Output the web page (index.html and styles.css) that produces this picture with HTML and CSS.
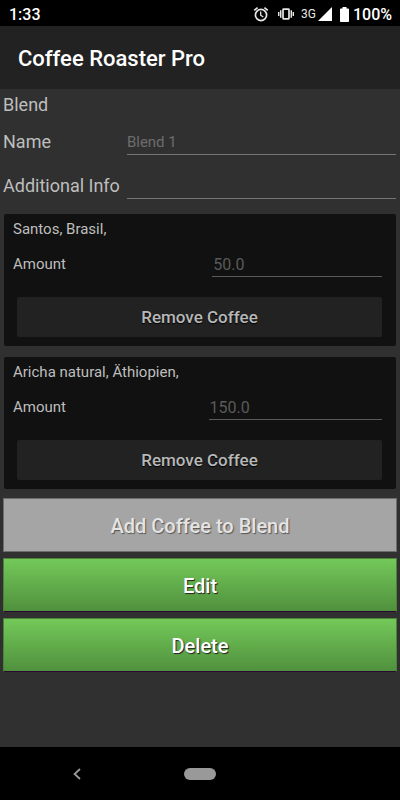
FILE: index.html
```html
<!DOCTYPE html>
<html lang="en">
<head>
<meta charset="utf-8">
<meta name="viewport" content="width=device-width, initial-scale=1">
<title>Coffee Roaster Pro</title>
<link rel="stylesheet" href="styles.css">
</head>
<body>
<div class="status">
  <span class="clock">1:33</span>
  <div class="indicators">
    <svg class="alarm" width="16" height="16" viewBox="0 0 16 16" fill="none" stroke="#e6e6e6" aria-hidden="true">
      <circle cx="8" cy="9" r="5.6" stroke-width="1.7"/>
      <path d="M7.7 5.5V9.2L10.3 11" stroke-width="1.3"/>
      <path d="M1.2 4.4L4.6 1.6M14.8 4.4L11.4 1.6" stroke-width="1.7"/>
    </svg>
    <svg class="vibrate" width="16" height="12" viewBox="0 0 16 12" fill="none" stroke="#e6e6e6" aria-hidden="true">
      <rect x="5" y="1.2" width="6" height="9.6" rx=".6" stroke-width="1.7"/>
      <path d="M2.7 2.3V9.7M13.3 2.3V9.7" stroke-width="1.5"/>
      <path d="M.7 4.1V7.9M15.3 4.1V7.9" stroke-width="1.4"/>
    </svg>
    <span class="network">3G</span>
    <svg class="signal" width="14" height="14" viewBox="0 0 14 14" fill="#fff" aria-hidden="true"><path d="M14 0V14H0Z"/></svg>
    <svg class="battery" width="9" height="15" viewBox="0 0 9 15" fill="#fff" aria-hidden="true"><path d="M2.5 0H6.5V1.5H8.2Q9 1.5 9 2.3V14.2Q9 15 8.2 15H.8Q0 15 0 14.2V2.3Q0 1.5.8 1.5H2.5Z"/></svg>
    <span class="level">100%</span>
  </div>
</div>
<header class="bar"><h1>Coffee Roaster Pro</h1></header>
<main>
  <h2>Blend</h2>
  <div class="fields">
    <label for="name">Name</label>
    <input id="name" type="text" placeholder="Blend 1">
    <label for="info">Additional Info</label>
    <input id="info" type="text">
  </div>
  <section class="card">
    <h3>Santos, Brasil,</h3>
    <div class="amount">
      <label for="amount1">Amount</label>
      <input id="amount1" type="text" inputmode="decimal" placeholder="50.0">
    </div>
    <button class="remove" type="button">Remove Coffee</button>
  </section>
  <section class="card">
    <h3>Aricha natural, Äthiopien,</h3>
    <div class="amount wide">
      <label for="amount2">Amount</label>
      <input id="amount2" type="text" inputmode="decimal" placeholder="150.0">
    </div>
    <button class="remove" type="button">Remove Coffee</button>
  </section>
  <div class="actions">
    <button class="action add" type="button">Add Coffee to Blend</button>
    <button class="action" type="button">Edit</button>
    <button class="action" type="button">Delete</button>
  </div>
</main>
<nav class="system">
  <button type="button" aria-label="Back">
    <svg width="8" height="12" viewBox="0 0 8 12" fill="none" stroke="#999" stroke-width="1.8" aria-hidden="true"><path d="M7 1L1.6 6L7 11"/></svg>
  </button>
  <button class="home" type="button" aria-label="Home"></button>
</nav>
</body>
</html>
```
FILE: styles.css
```css
* {
  box-sizing: border-box;
}

body {
  margin: 0;
  min-height: 100vh;
  display: flex;
  flex-direction: column;
  background: #303030;
  color: #bebebe;
  font-family: Roboto, sans-serif;
  font-size: 15px;
}

h1, h2, h3 {
  margin: 0;
}

input, button {
  margin: 0;
  border: 0;
  border-radius: 0;
  font-family: inherit;
}

.status {
  display: flex;
  justify-content: space-between;
  align-items: center;
  height: 26px;
  padding: 2px 8px 0 9px;
  background: #000;
  color: #fff;
  font-size: 16px;
  font-weight: 500;
}

.indicators {
  display: flex;
  align-items: center;
}

.vibrate {
  margin-left: 9px;
}

.network {
  margin-left: 7px;
  color: #e6e6e6;
  font-size: 12px;
  font-weight: 400;
}

.signal {
  margin-left: 2px;
}

.battery {
  margin: 0 4px 0 8px;
}

.bar {
  display: flex;
  align-items: center;
  height: 63px;
  padding: 2px 18px 0;
  background: #222;
  color: #fff;
}

h1 {
  font-size: 22px;
  font-weight: 500;
}

main {
  flex: 1;
  padding: 4px 3px 8px;
}

h2 {
  font-size: 18px;
  font-weight: 400;
  line-height: 24px;
}

.fields {
  display: grid;
  grid-template-columns: auto 1fr;
  gap: 18px 7px;
  margin: 12px 1px 15px 0;
  font-size: 18px;
  line-height: 26px;
}

input {
  width: 100%;
  min-width: 0;
  height: 26px;
  padding: 1px 0 0;
  border-bottom: 1px solid #757575;
  background: transparent;
  color: #bebebe;
  font-size: 16px;
  outline: none;
}

.fields input {
  font-size: 15px;
}

input::placeholder {
  color: #6c6c6c;
  opacity: 1;
}

.card {
  margin: 0 1px 11px;
  padding: 5px 14px 9px 13px;
  border-radius: 2px;
  background: #111;
}

h3 {
  margin-left: -4px;
  font-size: 15px;
  font-weight: 400;
  line-height: 20px;
}

.amount {
  display: grid;
  grid-template-columns: 1fr 46%;
  align-items: center;
  margin: 12px 0 20px -4px;
}

.amount.wide {
  grid-template-columns: 1fr 47%;
}

.amount input {
  padding-left: 1px;
  border-color: #5a5a5a;
}

.amount input::placeholder {
  color: #5a5a5a;
}

.remove {
  display: block;
  width: 100%;
  height: 40px;
  border-radius: 2px;
  background: #222;
  color: #b8b8b8;
  font-size: 17px;
  font-weight: 500;
  text-shadow: 0 1px 1px #000;
}

.actions {
  display: grid;
  gap: 6px;
  margin-top: -2px;
}

.action {
  height: 54px;
  padding-top: 3px;
  border: 1px solid #4b8436;
  border-bottom-color: #2a0a33;
  background: linear-gradient(#74c95a, #50903d) padding-box;
  color: #fff;
  font-size: 20px;
  font-weight: 500;
  text-shadow: 1px 1px 1px #222;
}

.action.add {
  border-color: #6c6c6c;
  background: #a5a5a5;
  color: #e4e4e4;
  text-shadow: 1px 1px 1px #555;
}

.system {
  display: grid;
  grid-template-columns: 1fr auto 1fr;
  align-items: center;
  height: 53px;
  background: #000;
}

.system button {
  display: flex;
  justify-self: center;
  padding: 0;
  background: transparent;
}

.system button:first-child {
  margin-right: 30px;
}

.system .home {
  width: 32px;
  height: 12px;
  border-radius: 6px;
  background: #999;
}
```
